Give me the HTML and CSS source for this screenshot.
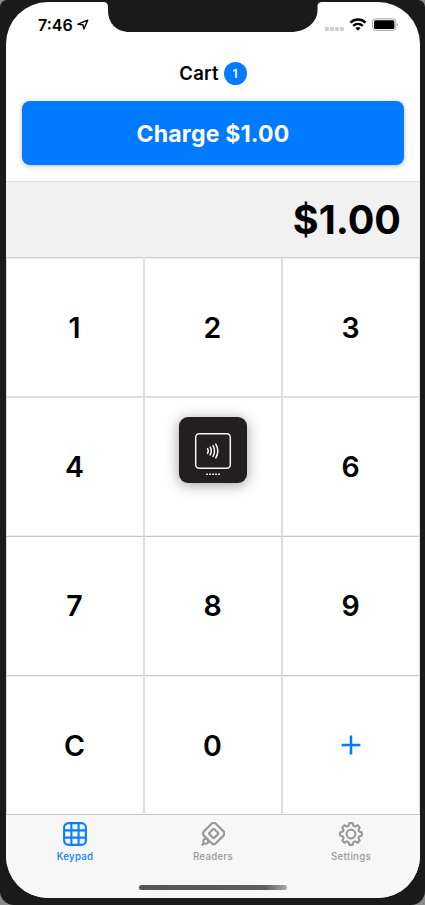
FILE: index.html
```html
<!DOCTYPE html>
<html lang="en">
<head>
<meta charset="utf-8">
<title>Keypad</title>
<link rel="stylesheet" href="styles.css">
</head>
<body>
<div class="device">
  <main class="screen">
    <svg class="notch" width="220" height="31" viewBox="0 0 220 31"><path d="M0 0C3.500 0 5 1.500 5 5V8C5 21 13 30 27 30H188C202 30 214.500 21 214.500 8V5C214.500 1.500 216 0 219.500 0Z" fill="#1a1a1a"/></svg>
    <div class="status">
      <div class="clock"><span>7:46</span>
        <svg width="12" height="12" viewBox="0 0 12 12"><path d="M1 5.200L10.700 1.200L6.900 10L5.900 5.700Z" fill="none" stroke="#000" stroke-width="1.400" stroke-linejoin="round"/></svg>
      </div>
      <div class="indicators">
        <svg width="75" height="16" viewBox="0 0 75 16">
          <g fill="#cfcfcf"><rect x="1" y="10" width="4" height="4" rx="1.300"/><rect x="6" y="10" width="4" height="4" rx="1.300"/><rect x="11" y="10" width="4" height="4" rx="1.300"/><rect x="16" y="10" width="4" height="4" rx="1.300"/></g>
          <g fill="none" stroke="#000" stroke-width="2.400"><path d="M26.500 5.600C30.600 1.500 37.400 1.500 41.500 5.600"/><path d="M29.200 8.900C32 6.300 36 6.300 38.800 8.900"/></g>
          <path d="M31.400 11Q34 8.900 36.600 11L34 13.700Z"/>
          <rect x="48.600" y="1.800" width="23.200" height="11.600" rx="3" fill="none" stroke="#a6a6a6"/>
          <rect x="50" y="3.300" width="20.400" height="8.700" rx="1.600"/>
          <path d="M73 5.500Q74.800 7.500 73 9.600Z" fill="#a6a6a6"/>
        </svg>
      </div>
    </div>
    <header class="cart">
      <div class="cart-title"><span>Cart</span><span class="count">1</span></div>
      <button class="charge">Charge $1.00</button>
    </header>
    <output class="amount">$1.00</output>
    <section class="keys">
      <button>1</button><button>2</button><button>3</button>
      <button>4</button>
      <button class="reader-key" aria-label="5"><svg class="reader" width="68" height="66" viewBox="0 0 68 66">
        <rect width="68" height="66" rx="9" fill="#231f20"/>
        <rect x="16.700" y="16.700" width="34.600" height="34.600" rx="3.500" fill="none" stroke="#f4f4f4" stroke-width="1.500"/>
        <g fill="none" stroke="#fff" stroke-width="1.500" stroke-linecap="round"><path d="M28.600 31.600Q30 34 28.600 36.400"/><path d="M31.200 30.100Q33.400 34 31.200 37.900"/><path d="M34 28.600Q37 34 34 39.400"/><path d="M36.800 27.100Q40.800 34 36.800 40.900"/></g>
        <path d="M27 57.300H41.500" stroke="#d8d8d8" stroke-width="1.400" stroke-dasharray="2 1"/>
      </svg></button>
      <button>6</button>
      <button>7</button><button>8</button><button>9</button>
      <button>C</button><button>0</button>
      <button aria-label="Add"><svg class="plus" width="20" height="20" viewBox="0 0 20 20"><path d="M10 .6V19.400M.6 10H19.400" stroke="#007aff" stroke-width="2.500"/></svg></button>
    </section>
    <nav class="tabs">
      <a class="tab active"><svg width="24" height="24" viewBox="0 0 24 24"><g fill="none" stroke="currentColor" stroke-width="2.100"><rect x="1.100" y="1.100" width="21.800" height="21.800" rx="4.500"/><path d="M8.400 1V23M15.600 1V23M1 8.400H23M1 15.600H23"/></g></svg><span>Keypad</span></a>
      <a class="tab"><svg width="24" height="24" viewBox="0 0 24 24"><g fill="none" stroke="currentColor" stroke-width="2.200"><rect x="4.300" y="3.100" width="16.800" height="16.800" rx="3" transform="rotate(45 12.700 11.500)"/><rect x="9.200" y="8" width="7" height="7" rx=".7" transform="rotate(45 12.700 11.500)"/><path d="M3.600 20.600L.8 23.400"/><circle cx="4.700" cy="19.200" r="2.500" fill="#f7f7f7" stroke-width="2"/></g></svg><span>Readers</span></a>
      <a class="tab"><svg width="24" height="24" viewBox="0 0 24 24"><g fill="none" stroke="currentColor" stroke-width="2.100" stroke-linejoin="round"><circle cx="12" cy="12" r="4.400"/><path d="M10.400 1.100H13.600L14.500 3.900L16.100 4.600L18.600 3.300L20.700 5.400L19.400 7.900L20.100 9.500L22.900 10.400V13.600L20.100 14.500L19.400 16.100L20.700 18.600L18.600 20.700L16.100 19.400L14.500 20.100L13.600 22.900H10.400L9.500 20.100L7.900 19.400L5.400 20.700L3.300 18.600L4.600 16.100L3.900 14.500L1.100 13.600V10.400L3.900 9.500L4.600 7.900L3.300 5.400L5.400 3.300L7.900 4.600L9.500 3.900Z"/></g></svg><span>Settings</span></a>
    </nav>
    <div class="home"></div>
  </main>
</div>
</body>
</html>
```
FILE: styles.css
```css
* { box-sizing: border-box; }
body { margin: 0; background: #8b8b8b; font-family: Inter, "Liberation Sans", sans-serif; color: #000; }
button { font: inherit; color: inherit; padding: 0; margin: 0; border: 0; background: none; }
svg { display: block; }
.device { width: 425px; height: 905px; overflow: hidden; padding: 2px 5px 7px 6px; background: #1a1a1a; border-radius: 7px 7px 14px 14px; }
.screen { position: relative; width: 414px; height: 896px; overflow: hidden; border-radius: 42px; background: #fff; display: flex; flex-direction: column; }
.notch { position: absolute; left: 97px; top: 0; }
.status { height: 44px; padding: 13px 21px 0 32px; display: flex; justify-content: space-between; }
.clock { display: flex; gap: 4px; font-size: 16px; line-height: 20px; font-weight: 600; }
.clock svg { margin-top: 4px; }
.indicators { padding-top: 2px; }
.cart { height: 135px; padding: 16px 16px 0; }
.cart-title { height: 23px; display: flex; justify-content: center; align-items: center; gap: 5px; font-size: 18.5px; line-height: 20px; font-weight: 600; letter-spacing: .2px; }
.cart-title span:first-child { padding-bottom: 1px; }
.count { width: 23px; height: 23px; border-radius: 50%; background: #007aff; color: #fff; font-size: 12px; line-height: 23px; text-align: center; letter-spacing: 0; }
.charge { display: block; width: 382px; height: 64px; padding-top: 2px; margin-top: 16px; border-radius: 8px; background: #007aff; color: #fff; font-size: 23px; font-weight: 700; letter-spacing: .25px; box-shadow: 0 1px 5px rgba(0,0,0,.28); }
.amount { height: 77px; padding-right: 19px; border-top: 1px solid #dedede; border-bottom: 1px solid #cfcfcf; background: #f1f1f1; display: flex; justify-content: flex-end; align-items: center; font-size: 39.5px; font-weight: 700; }
.keys { display: grid; grid-template-columns: repeat(3, 138px); grid-template-rows: 139px 139px 140px 138px; }
.keys button { display: flex; align-items: center; justify-content: center; border: 1px solid #dedede; padding-right: 1px; font-size: 28.5px; font-weight: 600; }
.keys button:nth-child(-n+3) { border-top-color: #eee; }
.keys button:nth-child(n+4):nth-child(-n+6) { border-bottom-color: #efefef; }
.keys button:nth-child(n+7):nth-child(-n+9) { border-top-color: #c9c9c9; border-bottom-color: #c9c9c9; padding-bottom: 1px; }
.keys button:nth-child(n+10) { border-top-color: #efefef; border-bottom-color: #fff; }
.keys .reader-key { padding: 0 0 33px; }
.reader { filter: drop-shadow(0 2px 7px rgba(0,0,0,.38)); }
.tabs { height: 84px; border-top: 1px solid #cacaca; background: #f7f7f7; display: grid; grid-template-columns: repeat(3, 1fr); }
.tab { display: flex; flex-direction: column; align-items: center; padding-top: 7px; gap: 5px; color: #999; font-size: 9.7px; line-height: 12px; font-weight: 500; letter-spacing: .3px; }
.active { color: #0a7fff; }
.home { position: absolute; left: 133px; bottom: 8px; width: 148px; height: 5px; border-radius: 3px; background: linear-gradient(90deg, #555 0, #5b5e5c 85%, #aaa); }
```
